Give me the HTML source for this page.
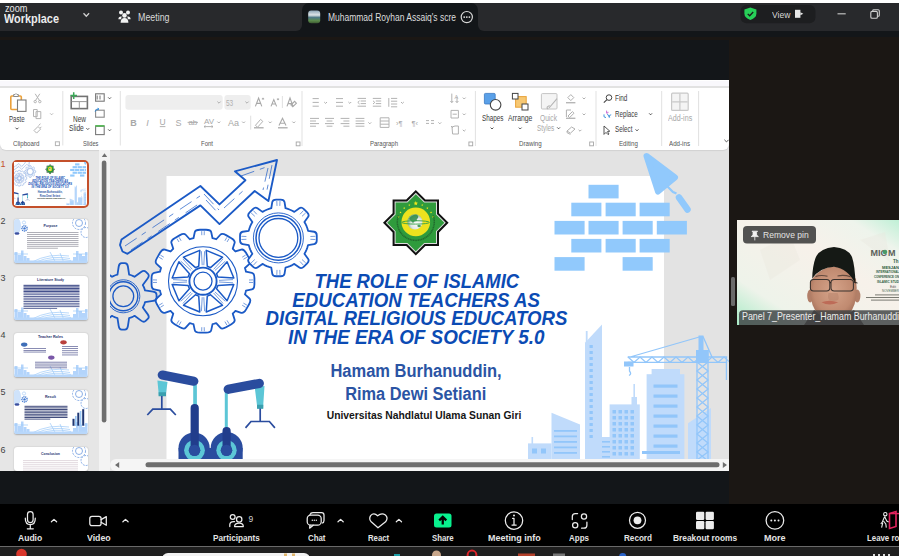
<!DOCTYPE html>
<html><head><meta charset="utf-8">
<style>
*{margin:0;padding:0;box-sizing:border-box}
html,body{width:899px;height:556px;overflow:hidden;background:#131619;font-family:"Liberation Sans",sans-serif}
.a{position:absolute}
.t{position:absolute;white-space:nowrap;line-height:1}
svg{position:absolute}
</style></head><body>
<div class="a" style="left:0;top:0;width:899px;height:3px;background:#fff"></div>
<div class="a" style="left:729px;top:37px;width:170px;height:467px;background:#1b1714"></div>
<div class="a" style="left:0;top:37px;width:899px;height:3px;background:#1b1714"></div>
<div class="a" style="left:0;top:504px;width:899px;height:42px;background:#000"></div>
<div class="a" style="left:0;top:546px;width:899px;height:1px;background:#6a6a6a"></div>
<div class="a" style="left:0;top:547px;width:899px;height:9px;background:#1f1f1f"></div>
<div class="a" style="left:0;top:3px;width:899px;height:22px;background:#28292c"></div>
<div class="a" style="left:0;top:3px;width:302px;height:28px;background:#28292c;border-bottom-right-radius:6px"></div>
<div class="a" style="left:478px;top:3px;width:421px;height:28px;background:#28292c;border-bottom-left-radius:6px"></div>
<div class="a" style="left:302px;top:3px;width:176px;height:28px;background:#131619;border-radius:7px 7px 0 0"></div>
<svg style="left:0;top:0" width="899" height="31">
 <path d="M83.5 13.3 L86.3 16.3 L89.1 13.3" fill="none" stroke="#cfcfcf" stroke-width="1.3"/>
 <!-- meeting people icon -->
 <g fill="#f2f2f2">
  <circle cx="121" cy="12.6" r="2"/><circle cx="128" cy="12.6" r="2"/>
  <circle cx="124.5" cy="15.4" r="2.3"/>
  <path d="M118.4 19.2 q0-2.6 2.6-2.6 h0.8 q-0.6 1 -0.6 2.6 z"/>
  <path d="M130.6 19.2 q0-2.6 -2.6-2.6 h-0.8 q0.6 1 0.6 2.6 z"/>
  <path d="M120.6 22.8 q0-4.8 3.9-4.8 q3.9 0 3.9 4.8 z"/>
 </g>
 <!-- tab thumbnail icon -->
 <defs>
  <linearGradient id="tg" x1="0" y1="0" x2="0" y2="1">
   <stop offset="0" stop-color="#8fa7b8"/><stop offset="0.35" stop-color="#dfe5e8"/>
   <stop offset="0.55" stop-color="#4f7a86"/><stop offset="0.8" stop-color="#5b8a4a"/><stop offset="1" stop-color="#3d5b33"/>
  </linearGradient>
 </defs>
 <rect x="308.2" y="10.6" width="12" height="12.6" rx="3" fill="url(#tg)"/>
 <!-- ellipsis circle -->
 <circle cx="466.8" cy="17.1" r="5.6" fill="none" stroke="#d8d8d8" stroke-width="1.2"/>
 <circle cx="464.2" cy="17.1" r="0.9" fill="#e0e0e0"/><circle cx="466.8" cy="17.1" r="0.9" fill="#e0e0e0"/><circle cx="469.4" cy="17.1" r="0.9" fill="#e0e0e0"/>
 <!-- view pill -->
 <rect x="740.5" y="5" width="75" height="18.3" rx="6" fill="#1d1e20"/>
 <path d="M750.4 7.5 L756.4 9.6 V13.6 Q756.4 18 750.4 20 Q744.4 18 744.4 13.6 V9.6 Z" fill="#27cf58"/>
 <path d="M747.7 13.9 L749.7 15.8 L753.2 12" fill="none" stroke="#1a1a1a" stroke-width="1.3"/>
 <rect x="795" y="9.8" width="5.4" height="8" fill="#e8e8e8"/>
 <path d="M800.4 12.3 L803.3 13.8 L800.4 15.3 Z" fill="#e8e8e8"/>
 <!-- minimize -->
 <rect x="837.5" y="13.2" width="8.2" height="1.2" fill="#bdbdbd"/>
 <!-- restore -->
 <rect x="870.8" y="11.4" width="6.6" height="6.8" rx="1.3" fill="none" stroke="#cfcfcf" stroke-width="1.1"/>
 <path d="M872.8 11.2 V10.6 Q872.8 9.8 873.8 9.8 H878.2 Q879.3 9.8 879.3 10.9 V15.2 Q879.3 16.2 878.3 16.2 H877.6" fill="none" stroke="#cfcfcf" stroke-width="1.1"/>
</svg>

<div class="a" style="left:0;top:80px;width:729px;height:391px;background:#e4e4e6;overflow:hidden">
  <div class="a" style="left:0;top:0;width:729px;height:1px;background:#fff"></div>
  <div class="a" style="left:0;top:1px;width:729px;height:5px;background:#f9f8fc"></div>
  <div class="a" style="left:0;top:6px;width:729px;height:2px;background:#e2e2e2"></div>
  <div class="a" style="left:0;top:70px;width:110px;height:321px;background:#e6e6e6"></div>
  <div class="a" style="left:110px;top:70px;width:619px;height:321px;background:#e3e3e3"></div>
  <div class="a" style="left:0;top:8px;width:729px;height:62px;background:#fff;border-radius:0 0 6px 6px;box-shadow:0 1px 1px rgba(0,0,0,0.08)"></div>
</div>
<svg style="left:110px;top:150px" width="619" height="309" viewBox="110 150 619 309" overflow="hidden">
<defs><g id="s1"><rect x="166.5" y="176" width="497.5" height="283" fill="#fff"/>
<path d="M121.50 239.50 L200.40 186.00 L219.50 204.40 L245.40 180.20 L234.90 171.30 L277.00 160.00 L268.40 201.10 L254.70 191.00 L219.50 224.10 L200.40 205.40 L127.50 253.80 L122.50 251.50 L120.00 245.00 Z" fill="none" stroke="#1b5ac6" stroke-width="1.9" stroke-linejoin="round"/>
<path d="M125 246 L200 196 M131 250 L200 203 M204 194 L219 210 M224 208 L244 190 M206 200 L219 214 M241 176 L272 165 L266 195 M268 168 L263 190" fill="none" stroke="#1b5ac6" stroke-width="0.7" stroke-dasharray="14 6 5 8"/>
<path d="M193.48 238.24 L194.76 232.31 Q195.31 229.77 199.93 229.77 L206.07 229.77 Q210.69 229.77 211.24 232.31 L212.52 238.24 L213.46 238.46 L214.39 238.70 L215.31 238.96 L216.23 239.24 L220.31 234.74 Q222.06 232.82 226.05 235.12 L231.38 238.20 Q235.37 240.50 234.58 242.98 L232.73 248.76 L233.43 249.42 L234.11 250.09 L234.78 250.77 L235.44 251.47 L241.22 249.62 Q243.70 248.83 246.00 252.82 L249.08 258.15 Q251.38 262.14 249.46 263.89 L244.96 267.97 L245.24 268.89 L245.50 269.81 L245.74 270.74 L245.96 271.68 L251.89 272.96 Q254.43 273.51 254.43 278.13 L254.43 284.27 Q254.43 288.89 251.89 289.44 L245.96 290.72 L245.74 291.66 L245.50 292.59 L245.24 293.51 L244.96 294.43 L249.46 298.51 Q251.38 300.26 249.08 304.25 L246.00 309.58 Q243.70 313.57 241.22 312.78 L235.44 310.93 L234.78 311.63 L234.11 312.31 L233.43 312.98 L232.73 313.64 L234.58 319.42 Q235.37 321.90 231.38 324.20 L226.05 327.28 Q222.06 329.58 220.31 327.66 L216.23 323.16 L215.31 323.44 L214.39 323.70 L213.46 323.94 L212.52 324.16 L211.24 330.09 Q210.69 332.63 206.07 332.63 L199.93 332.63 Q195.31 332.63 194.76 330.09 L193.48 324.16 L192.54 323.94 L191.61 323.70 L190.69 323.44 L189.77 323.16 L185.69 327.66 Q183.94 329.58 179.95 327.28 L174.62 324.20 Q170.63 321.90 171.42 319.42 L173.27 313.64 L172.57 312.98 L171.89 312.31 L171.22 311.63 L170.56 310.93 L164.78 312.78 Q162.30 313.57 160.00 309.58 L156.92 304.25 Q154.62 300.26 156.54 298.51 L161.04 294.43 L160.76 293.51 L160.50 292.59 L160.26 291.66 L160.04 290.72 L154.11 289.44 Q151.57 288.89 151.57 284.27 L151.57 278.13 Q151.57 273.51 154.11 272.96 L160.04 271.68 L160.26 270.74 L160.50 269.81 L160.76 268.89 L161.04 267.97 L156.54 263.89 Q154.62 262.14 156.92 258.15 L160.00 252.82 Q162.30 248.83 164.78 249.62 L170.56 251.47 L171.22 250.77 L171.89 250.09 L172.57 249.42 L173.27 248.76 L171.42 242.98 Q170.63 240.50 174.62 238.20 L179.95 235.12 Q183.94 232.82 185.69 234.74 L189.77 239.24 L190.69 238.96 L191.61 238.70 L192.54 238.46 Z" fill="#fff" stroke="#1b5ac6" stroke-width="1.8" stroke-linejoin="round"/>
<circle cx="203" cy="281.2" r="34.5" fill="none" stroke="#1b5ac6" stroke-width="1.1"/>
<circle cx="203" cy="281.2" r="13.6" fill="none" stroke="#1b5ac6" stroke-width="1.9"/>
<circle cx="203" cy="281.2" r="9" fill="none" stroke="#1b5ac6" stroke-width="1.3"/>
<path d="M206.24 250.37 L222.51 257.11 L210.51 267.64 L207.27 266.30 Z M227.09 261.69 L233.83 277.96 L217.90 276.93 L216.56 273.69 Z M233.83 284.44 L227.09 300.71 L216.56 288.71 L217.90 285.47 Z M222.51 305.29 L206.24 312.03 L207.27 296.10 L210.51 294.76 Z M199.76 312.03 L183.49 305.29 L195.49 294.76 L198.73 296.10 Z M178.91 300.71 L172.17 284.44 L188.10 285.47 L189.44 288.71 Z M172.17 277.96 L178.91 261.69 L189.44 273.69 L188.10 276.93 Z M183.49 257.11 L199.76 250.37 L198.73 266.30 L195.49 267.64 Z " fill="none" stroke="#1b5ac6" stroke-width="1.5" stroke-linejoin="round"/>
<path d="M201.8 235.2 L201.7 231.2 M204.2 235.2 L204.3 231.2 M224.9 240.8 L226.9 237.3 M227.0 242.0 L229.1 238.6 M242.2 257.2 L245.6 255.1 M243.4 259.3 L246.9 257.3 M249.0 280.0 L253.0 279.9 M249.0 282.4 L253.0 282.5 M243.4 303.1 L246.9 305.1 M242.2 305.2 L245.6 307.3 M227.0 320.4 L229.1 323.8 M224.9 321.6 L226.9 325.1 M204.2 327.2 L204.3 331.2 M201.8 327.2 L201.7 331.2 M181.1 321.6 L179.1 325.1 M179.0 320.4 L176.9 323.8 M163.8 305.2 L160.4 307.3 M162.6 303.1 L159.1 305.1 M157.0 282.4 L153.0 282.5 M157.0 280.0 L153.0 279.9 M162.6 259.3 L159.1 257.3 M163.8 257.2 L160.4 255.1 M179.0 242.0 L176.9 238.6 M181.1 240.8 L179.1 237.3  M202.2 265.2 L201.4 251.2 M203.8 265.2 L204.6 251.2 M213.7 269.3 L223.1 258.9 M214.9 270.5 L225.3 261.1 M219.0 280.4 L233.0 279.6 M219.0 282.0 L233.0 282.8 M214.9 291.9 L225.3 301.3 M213.7 293.1 L223.1 303.5 M203.8 297.2 L204.6 311.2 M202.2 297.2 L201.4 311.2 M192.3 293.1 L182.9 303.5 M191.1 291.9 L180.7 301.3 M187.0 282.0 L173.0 282.8 M187.0 280.4 L173.0 279.6 M191.1 270.5 L180.7 261.1 M192.3 269.3 L182.9 258.9 " stroke="#1b5ac6" stroke-width="0.6" fill="none"/>
<path d="M271.28 208.24 L272.25 202.14 Q272.66 199.53 276.11 199.53 L280.69 199.53 Q284.14 199.53 284.55 202.14 L285.52 208.24 L287.83 208.89 L290.07 209.72 L292.25 210.72 L294.34 211.89 L299.34 208.27 Q301.48 206.71 303.91 209.14 L307.16 212.39 Q309.59 214.82 308.03 216.96 L304.41 221.96 L305.58 224.05 L306.58 226.23 L307.41 228.47 L308.06 230.78 L314.16 231.75 Q316.77 232.16 316.77 235.61 L316.77 240.19 Q316.77 243.64 314.16 244.05 L308.06 245.02 L307.41 247.33 L306.58 249.57 L305.58 251.75 L304.41 253.84 L308.03 258.84 Q309.59 260.98 307.16 263.41 L303.91 266.66 Q301.48 269.09 299.34 267.53 L294.34 263.91 L292.25 265.08 L290.07 266.08 L287.83 266.91 L285.52 267.56 L284.55 273.66 Q284.14 276.27 280.69 276.27 L276.11 276.27 Q272.66 276.27 272.25 273.66 L271.28 267.56 L268.97 266.91 L266.73 266.08 L264.55 265.08 L262.46 263.91 L257.46 267.53 Q255.32 269.09 252.89 266.66 L249.64 263.41 Q247.21 260.98 248.77 258.84 L252.39 253.84 L251.22 251.75 L250.22 249.57 L249.39 247.33 L248.74 245.02 L242.64 244.05 Q240.03 243.64 240.03 240.19 L240.03 235.61 Q240.03 232.16 242.64 231.75 L248.74 230.78 L249.39 228.47 L250.22 226.23 L251.22 224.05 L252.39 221.96 L248.77 216.96 Q247.21 214.82 249.64 212.39 L252.89 209.14 Q255.32 206.71 257.46 208.27 L262.46 211.89 L264.55 210.72 L266.73 209.72 L268.97 208.89 Z" fill="#fff" stroke="#1b5ac6" stroke-width="1.8" stroke-linejoin="round"/>
<circle cx="278.4" cy="237.9" r="25" fill="none" stroke="#1b5ac6" stroke-width="0.9"/>
<circle cx="278.4" cy="237.9" r="22.4" fill="none" stroke="#1b5ac6" stroke-width="1.5"/>
<circle cx="278.4" cy="237.9" r="19.4" fill="none" stroke="#1b5ac6" stroke-width="1.3"/>
<path d="M277.0 205.9 L276.8 200.9 M279.8 205.9 L280.0 200.9 M300.0 214.3 L303.4 210.6 M302.0 216.3 L305.7 212.9 M310.4 236.5 L315.4 236.3 M310.4 239.3 L315.4 239.5 M302.0 259.5 L305.7 262.9 M300.0 261.5 L303.4 265.2 M279.8 269.9 L280.0 274.9 M277.0 269.9 L276.8 274.9 M256.8 261.5 L253.4 265.2 M254.8 259.5 L251.1 262.9 M246.4 239.3 L241.4 239.5 M246.4 236.5 L241.4 236.3 M254.8 216.3 L251.1 212.9 M256.8 214.3 L253.4 210.6 " stroke="#1b5ac6" stroke-width="0.6" fill="none"/>
<path d="M117.48 274.57 L118.70 266.50 Q119.22 263.05 121.67 263.05 L124.93 263.05 Q127.38 263.05 127.90 266.50 L129.12 274.57 L130.53 274.99 L131.91 275.51 L133.25 276.12 L134.55 276.81 L141.11 271.98 Q143.92 269.90 145.66 271.63 L147.97 273.94 Q149.70 275.68 147.62 278.49 L142.79 285.05 L143.48 286.35 L144.09 287.69 L144.61 289.07 L145.03 290.48 L153.10 291.70 Q156.55 292.22 156.55 294.67 L156.55 297.93 Q156.55 300.38 153.10 300.90 L145.03 302.12 L144.61 303.53 L144.09 304.91 L143.48 306.25 L142.79 307.55 L147.62 314.11 Q149.70 316.92 147.97 318.66 L145.66 320.97 Q143.92 322.70 141.11 320.62 L134.55 315.79 L133.25 316.48 L131.91 317.09 L130.53 317.61 L129.12 318.03 L127.90 326.10 Q127.38 329.55 124.93 329.55 L121.67 329.55 Q119.22 329.55 118.70 326.10 L117.48 318.03 L116.07 317.61 L114.69 317.09 L113.35 316.48 L112.05 315.79 L105.49 320.62 Q102.68 322.70 100.94 320.97 L98.63 318.66 Q96.90 316.92 98.98 314.11 L103.81 307.55 L103.12 306.25 L102.51 304.91 L101.99 303.53 L101.57 302.12 L93.50 300.90 Q90.05 300.38 90.05 297.93 L90.05 294.67 Q90.05 292.22 93.50 291.70 L101.57 290.48 L101.99 289.07 L102.51 287.69 L103.12 286.35 L103.81 285.05 L98.98 278.49 Q96.90 275.68 98.63 273.94 L100.94 271.63 Q102.68 269.90 105.49 271.98 L112.05 276.81 L113.35 276.12 L114.69 275.51 L116.07 274.99 Z" fill="none" stroke="#1b5ac6" stroke-width="1.8" stroke-linejoin="round"/>
<circle cx="123.3" cy="296.3" r="16.5" fill="none" stroke="#1b5ac6" stroke-width="0.9"/>
<circle cx="123.3" cy="296.3" r="14.5" fill="none" stroke="#1b5ac6" stroke-width="1.4"/>
<circle cx="123.3" cy="296.3" r="10.4" fill="none" stroke="#1b5ac6" stroke-width="1.3"/>
<g>
<path d="M193.2 385 h3.7 v20 h-3.7z M224.8 392 h3 v37 h-3z" fill="#5cc6d6"/>
<circle cx="194.1" cy="448.1" r="15.6" fill="#2a4c9e"/><rect x="178.5" y="448" width="33" height="12" fill="#2a4c9e"/>
<circle cx="226.7" cy="448.1" r="16" fill="#2a4c9e"/><rect x="210.7" y="448" width="32" height="12" fill="#2a4c9e"/>
<circle cx="194.5" cy="450.3" r="10.4" fill="#5cc6d6"/><circle cx="194.5" cy="450.3" r="5.8" fill="#2a4c9e"/>
<circle cx="226.5" cy="450.3" r="10.2" fill="#5cc6d6"/><circle cx="226.5" cy="450.3" r="5.8" fill="#2a4c9e"/>
<path d="M194.7 408 V450 M226.6 431 V450" stroke="#213d8c" stroke-width="8.2" stroke-linecap="round"/><circle cx="194.6" cy="450.3" r="5.6" fill="#2a4c9e"/><circle cx="226.5" cy="450.3" r="5.6" fill="#2a4c9e"/>
<path d="M157.4 380.5 L167.5 382 L165.7 396 L158.9 396 Z M254.7 387 L264.5 386 L263 408.6 L257.4 408.6 Z" fill="#5cc6d6"/>
<path d="M158.6 392.2 H166 V396.2 H158.6 Z M257 404.8 H263.3 V408.8 H257 Z" fill="#3a9fae"/>
<path d="M162.3 375 L193.8 381.2 M228.2 389.3 L259.3 383.4" stroke="#2a4c9e" stroke-width="9.2" stroke-linecap="round"/>
<path d="M161.8 396 V409.2 M147.3 415 L152.8 409.2 H170.3 L175.8 415 M260.2 408.6 V421.5 M245.5 427.9 L251 421.5 H269.4 L274.9 427.9" fill="none" stroke="#2a4c9e" stroke-width="1.7"/>
</g>
<path d="M415.80 189.99 L425.41 199.60 L439.00 199.60 L439.00 213.19 L448.61 222.80 L439.00 232.41 L439.00 246.00 L425.41 246.00 L415.80 255.61 L406.19 246.00 L392.60 246.00 L392.60 232.41 L382.99 222.80 L392.60 213.19 L392.60 199.60 L406.19 199.60 Z" fill="#111"/>
<path d="M415.80 192.82 L424.58 201.60 L437.00 201.60 L437.00 214.02 L445.78 222.80 L437.00 231.58 L437.00 244.00 L424.58 244.00 L415.80 252.78 L407.02 244.00 L394.60 244.00 L394.60 231.58 L385.82 222.80 L394.60 214.02 L394.60 201.60 L407.02 201.60 Z" fill="#ddd"/>
<path d="M415.80 194.23 L424.17 202.60 L436.00 202.60 L436.00 214.43 L444.37 222.80 L436.00 231.17 L436.00 243.00 L424.17 243.00 L415.80 251.37 L407.43 243.00 L395.60 243.00 L395.60 231.17 L387.23 222.80 L395.60 214.43 L395.60 202.60 L407.43 202.60 Z" fill="#2f9b3c"/>
<circle cx="415.8" cy="221.9" r="14.3" fill="#eee21e"/>
<defs><radialGradient id="glb" cx="0.62" cy="0.62" r="0.7"><stop offset="0" stop-color="#ffffff"/><stop offset="0.55" stop-color="#dfe6e0"/><stop offset="1" stop-color="#5f9f6e"/></radialGradient></defs>
<circle cx="414.9" cy="221.9" r="7.6" fill="url(#glb)"/>
<path d="M409 219 q2 -4 7 -4.5 q3 1 2 3.5 q-2 1 -1 3 q-3 0 -4 2 q-2 -2 -4 -4z" fill="#2d8a4a" opacity="0.85"/>
<path d="M417.5 225 q2.5 -1 3.6 1 q-1.5 2 -3.6 0.6z" fill="#4a9a60"/>
<ellipse cx="415.6" cy="222.4" rx="13.8" ry="1.7" fill="none" stroke="#34a046" stroke-width="0.9"/>
<path d="M415.80 201.10 L416.41 202.56 L417.99 202.69 L416.78 203.72 L417.15 205.26 L415.80 204.44 L414.45 205.26 L414.82 203.72 L413.61 202.69 L415.19 202.56 Z" fill="#f2e81a"/><path d="M409.35 203.95 L409.65 204.68 L410.44 204.74 L409.84 205.26 L410.03 206.03 L409.35 205.61 L408.67 206.03 L408.86 205.26 L408.26 204.74 L409.05 204.68 Z" fill="#f2e81a"/><path d="M404.23 206.96 L404.53 207.69 L405.32 207.76 L404.72 208.27 L404.91 209.04 L404.23 208.63 L403.55 209.04 L403.74 208.27 L403.14 207.76 L403.93 207.69 Z" fill="#f2e81a"/><path d="M400.54 211.21 L400.84 211.94 L401.63 212.01 L401.03 212.52 L401.21 213.29 L400.54 212.88 L399.86 213.29 L400.04 212.52 L399.44 212.01 L400.23 211.94 Z" fill="#f2e81a"/><path d="M398.50 215.79 L398.80 216.52 L399.59 216.58 L398.99 217.10 L399.17 217.87 L398.50 217.46 L397.82 217.87 L398.01 217.10 L397.40 216.58 L398.19 216.52 Z" fill="#f2e81a"/><path d="M422.25 203.95 L422.55 204.68 L423.34 204.74 L422.74 205.26 L422.93 206.03 L422.25 205.61 L421.57 206.03 L421.76 205.26 L421.16 204.74 L421.95 204.68 Z" fill="#f2e81a"/><path d="M427.37 206.96 L427.67 207.69 L428.46 207.76 L427.86 208.27 L428.05 209.04 L427.37 208.63 L426.69 209.04 L426.88 208.27 L426.28 207.76 L427.07 207.69 Z" fill="#f2e81a"/><path d="M431.06 211.21 L431.37 211.94 L432.16 212.01 L431.56 212.52 L431.74 213.29 L431.06 212.88 L430.39 213.29 L430.57 212.52 L429.97 212.01 L430.76 211.94 Z" fill="#f2e81a"/><path d="M433.10 215.79 L433.41 216.52 L434.20 216.58 L433.59 217.10 L433.78 217.87 L433.10 217.46 L432.43 217.87 L432.61 217.10 L432.01 216.58 L432.80 216.52 Z" fill="#f2e81a"/>
<path d="M398.4 215.6 A18.5 18.5 0 1 0 433.2 215.6" fill="none" stroke="#1d5a28" stroke-width="1.5" stroke-dasharray="1.2 0.5" opacity="0.75"/>
<rect x="588.5" y="184.8" width="30.1" height="13.6" fill="#91c9fc"/><rect x="571.3" y="202.7" width="30.1" height="13.6" fill="#91c9fc"/><rect x="605.6" y="202.7" width="30.1" height="13.6" fill="#91c9fc"/><rect x="639.6" y="202.7" width="30.1" height="13.6" fill="#91c9fc"/><rect x="554.5" y="220.9" width="30.1" height="13.6" fill="#91c9fc"/><rect x="588.5" y="220.9" width="30.1" height="13.6" fill="#91c9fc"/><rect x="622.6" y="220.9" width="30.1" height="13.6" fill="#91c9fc"/><rect x="656.8" y="220.9" width="30.1" height="13.6" fill="#91c9fc"/><rect x="571.3" y="238.9" width="30.1" height="13.6" fill="#91c9fc"/><rect x="605.6" y="238.9" width="30.1" height="13.6" fill="#91c9fc"/><rect x="639.6" y="238.9" width="30.1" height="13.6" fill="#91c9fc"/><rect x="554.5" y="257.1" width="30.1" height="13.6" fill="#91c9fc"/><rect x="622.6" y="257.1" width="30.1" height="13.6" fill="#91c9fc"/>
<path d="M646.5 156 L675 177.5 L658 191.5 Z" fill="#91c9fc" stroke="#91c9fc" stroke-width="6" stroke-linejoin="round"/>
<path d="M667 186 L673 192 L676.5 193.5" fill="none" stroke="#91c9fc" stroke-width="2.2"/>
<path d="M679 197.5 L687.5 209.5" stroke="#91c9fc" stroke-width="6.5" stroke-linecap="round"/>
<g fill="#c0dbfb"><rect x="528" y="443.4" width="23.5" height="16"/><rect x="531.5" y="437" width="1.6" height="7"/><path d="M551.5 412.7 L580 424.5 V460 H551.5 Z"/><path d="M585 342.7 L602 324.5 V460 H585 Z"/><rect x="585.8" y="331" width="1.8" height="12"/><rect x="602" y="437" width="10" height="23"/><rect x="609.6" y="404.4" width="30.2" height="56"/><rect x="631.5" y="397" width="5.5" height="8"/><rect x="633.4" y="384" width="1.6" height="14"/><rect x="646.6" y="374.2" width="37.8" height="86"/><rect x="651.6" y="369" width="28.4" height="6"/><path d="M688 423.3 L711 408 V460 H688 Z"/></g><g fill="#92c6fa"><rect x="532" y="448.5" width="5" height="5"/><rect x="541" y="448.5" width="5" height="5"/><rect x="554" y="430" width="23" height="1.8"/><rect x="554" y="435.5" width="23" height="1.8"/><rect x="554" y="441" width="23" height="1.8"/><rect x="554" y="446.5" width="23" height="1.8"/><rect x="554" y="452" width="23" height="1.8"/><rect x="589.5" y="345" width="3.3" height="3"/><rect x="589.5" y="351" width="3.3" height="3"/><rect x="589.5" y="357" width="3.3" height="3"/><rect x="589.5" y="363" width="3.3" height="3"/><rect x="589.5" y="369" width="3.3" height="3"/><rect x="589.5" y="375" width="3.3" height="3"/><rect x="589.5" y="381" width="3.3" height="3"/><rect x="589.5" y="387" width="3.3" height="3"/><rect x="589.5" y="393" width="3.3" height="3"/><rect x="589.5" y="399" width="3.3" height="3"/><rect x="589.5" y="405" width="3.3" height="3"/><rect x="589.5" y="411" width="3.3" height="3"/><rect x="589.5" y="417" width="3.3" height="3"/><rect x="589.5" y="423" width="3.3" height="3"/><rect x="589.5" y="429" width="3.3" height="3"/><rect x="589.5" y="435" width="3.3" height="3"/><rect x="602" y="441" width="8" height="1.6"/><rect x="602" y="446" width="8" height="1.6"/><rect x="602" y="451" width="8" height="1.6"/><rect x="602" y="456" width="8" height="1.6"/><rect x="612.5" y="410" width="3.5" height="3.5"/><rect x="612.5" y="416" width="3.5" height="3.5"/><rect x="612.5" y="422" width="3.5" height="3.5"/><rect x="612.5" y="428" width="3.5" height="3.5"/><rect x="612.5" y="434" width="3.5" height="3.5"/><rect x="612.5" y="440" width="3.5" height="3.5"/><rect x="612.5" y="446" width="3.5" height="3.5"/><rect x="612.5" y="452" width="3.5" height="3.5"/><rect x="618.5" y="410" width="3.5" height="3.5"/><rect x="618.5" y="416" width="3.5" height="3.5"/><rect x="618.5" y="422" width="3.5" height="3.5"/><rect x="618.5" y="428" width="3.5" height="3.5"/><rect x="618.5" y="434" width="3.5" height="3.5"/><rect x="618.5" y="440" width="3.5" height="3.5"/><rect x="618.5" y="446" width="3.5" height="3.5"/><rect x="618.5" y="452" width="3.5" height="3.5"/><rect x="624.5" y="410" width="3.5" height="3.5"/><rect x="624.5" y="416" width="3.5" height="3.5"/><rect x="624.5" y="422" width="3.5" height="3.5"/><rect x="624.5" y="428" width="3.5" height="3.5"/><rect x="624.5" y="434" width="3.5" height="3.5"/><rect x="624.5" y="440" width="3.5" height="3.5"/><rect x="624.5" y="446" width="3.5" height="3.5"/><rect x="624.5" y="452" width="3.5" height="3.5"/><rect x="630.5" y="410" width="3.5" height="3.5"/><rect x="630.5" y="416" width="3.5" height="3.5"/><rect x="630.5" y="422" width="3.5" height="3.5"/><rect x="630.5" y="428" width="3.5" height="3.5"/><rect x="630.5" y="434" width="3.5" height="3.5"/><rect x="630.5" y="440" width="3.5" height="3.5"/><rect x="630.5" y="446" width="3.5" height="3.5"/><rect x="630.5" y="452" width="3.5" height="3.5"/><rect x="653.5" y="384.5" width="24" height="3.2"/><rect x="653.5" y="394.5" width="24" height="3.2"/><rect x="653.5" y="404.5" width="24" height="3.2"/><rect x="653.5" y="414.5" width="24" height="3.2"/><rect x="653.5" y="424.5" width="24" height="3.2"/><rect x="653.5" y="434.5" width="24" height="3.2"/><rect x="653.5" y="444.5" width="24" height="3.2"/><rect x="642" y="451" width="38" height="3"/></g>
<g fill="none" stroke="#92c6fa" stroke-width="1.3"><path d="M697 350 V460 M708 350 V460 M627.7 357 H727.2 M627.7 362.4 H727.2 M726.4 357 V380 M701 336.5 L630 357 M703 336.5 L712 357"/><path d="M697 362 L708 371 L697 380 L708 389 L697 398 L708 407 L697 416 L708 425 L697 434 L708 443 L697 452 L708 461"/><path d="M708 362 L697 371 L708 380 L697 389 L708 398 L697 407 L708 416 L697 425 L708 434 L697 443 L708 452 L697 460"/><path d="M628 357 L634 362.4 L640 357 L646 362.4 L652 357 L658 362.4 L664 357 L670 362.4 L676 357 L682 362.4 L688 357 L694 362.4 L700 357 L706 362.4 L712 357 L718 362.4 L724 357 L730 362.4"/><path d="M629.5 367 V371 Q632 374 629 375.5"/></g><g fill="#92c6fa"><rect x="698.5" y="335.5" width="5" height="22"/><rect x="696" y="350" width="12.5" height="12.5"/><rect x="624" y="361.5" width="9.5" height="5"/></g>
<g font-family="Liberation Sans" font-weight="bold" font-style="italic" font-size="20" fill="#0b4bb4"><text x="314.6" y="288.1" textLength="204.5" lengthAdjust="spacingAndGlyphs">THE ROLE OF ISLAMIC</text><text x="292.3" y="306.8" textLength="247.6" lengthAdjust="spacingAndGlyphs">EDUCATION TEACHERS AS</text><text x="265.6" y="325.1" textLength="301.9" lengthAdjust="spacingAndGlyphs">DIGITAL RELIGIOUS EDUCATORS</text><text x="287.9" y="344.2" textLength="256.5" lengthAdjust="spacingAndGlyphs">IN THE ERA OF SOCIETY 5.0</text></g>
<g font-family="Liberation Sans" font-weight="bold" font-size="17.6" fill="#2b54a4"><text x="330.4" y="377" textLength="171.3" lengthAdjust="spacingAndGlyphs">Hamam Burhanuddin,</text><text x="345.2" y="400.4" textLength="141" lengthAdjust="spacingAndGlyphs">Rima Dewi Setiani</text></g>
<text x="326.7" y="418.5" textLength="194.6" lengthAdjust="spacingAndGlyphs" font-family="Liberation Sans" font-weight="bold" font-size="11.8" fill="#151515">Universitas Nahdlatul Ulama Sunan Giri</text></g></defs>
<use href="#s1"/>
</svg>
<div class="a" style="left:99px;top:150px;width:11px;height:321px;background:#f3f3f3"></div>
<svg style="left:99px;top:150px" width="11" height="321">
 <path d="M2.8 7 L5.5 3.2 L8.2 7 Z" fill="#6e6e6e"/>
 <rect x="2.8" y="10.5" width="4.6" height="262" rx="2.3" fill="#6e6e6e"/>
</svg>
<div class="a" style="left:110px;top:459px;width:619px;height:12px;background:#f5f5f5;border-radius:6px 0 0 6px"></div>
<svg style="left:110px;top:459px" width="619" height="12">
 <path d="M9.2 3 L5 6 L9.2 9 Z" fill="#6e6e6e"/>
 <rect x="35.5" y="3.2" width="574" height="5" rx="2.5" fill="#6e6e6e"/>
 <path d="M612.8 3 L617 6 L612.8 9 Z" fill="#6e6e6e"/>
</svg>
<div class="a" style="left:12.2px;top:160px;width:76.4px;height:47.6px;border:2px solid #c4502b;border-radius:5px;background:#fff"></div>
<svg style="left:14.4px;top:162.2px" width="72" height="43.2" viewBox="166.5 176 497.5 280" preserveAspectRatio="none" overflow="hidden"><use href="#s1"/></svg>
<div class="t" style="left:0.6px;top:160.3px;font-size:9px;color:#c4502b">1</div>
<div class="t" style="left:0.6px;top:217.4px;font-size:9px;color:#444">2</div>
<div class="t" style="left:0.6px;top:274.0px;font-size:9px;color:#444">3</div>
<div class="t" style="left:0.6px;top:331.4px;font-size:9px;color:#444">4</div>
<div class="t" style="left:0.6px;top:388.3px;font-size:9px;color:#444">5</div>
<div class="t" style="left:0.6px;top:445.8px;font-size:9px;color:#444">6</div>
<div class="a" style="left:14px;top:218.6px;width:73.5px;height:44.5px;background:#fff;border-radius:3px;box-shadow:0 0.5px 1.5px rgba(0,0,0,0.25);overflow:hidden">
<svg style="left:0;top:0" width="73.5" height="44.5" viewBox="0 0 73.5 44.5"><g fill="#b3d4fb"><rect x="0.5" y="33" width="3" height="11.5"/><rect x="3.5" y="36" width="3.5" height="8.5"/><rect x="7" y="31.5" width="2.5" height="13.0"/><rect x="9.5" y="37" width="3" height="7.5"/><rect x="12.5" y="39" width="3" height="5.5"/><rect x="59" y="38" width="3" height="6.5"/><rect x="62" y="32" width="2.5" height="12.5"/><rect x="64.5" y="35" width="3.5" height="9.5"/><rect x="68" y="37" width="3" height="7.5"/><rect x="71" y="33" width="2.5" height="11.5"/></g><g fill="none" stroke="#9cc8f8" stroke-width="0.7"><path d="M18 43 Q35 34 55 37 M22 43 Q38 36 56 39.5 M26 43.5 Q40 38 57 41.5 M36 33 L42 44 M46 34 L50 44"/><path d="M0 35 H14 M59 35 H73.5"/></g><rect x="0" y="41.5" width="73.5" height="3" fill="#b8d7fb"/><ellipse cx="2.5" cy="7" rx="4.5" ry="8" fill="#cfe3fb"/><ellipse cx="3" cy="14.5" rx="2.5" ry="1.3" fill="#3a4fa0"/><circle cx="10.5" cy="9.4" r="2.6" fill="none" stroke="#3f77d0" stroke-width="1.4" stroke-dasharray="1.1 0.7"/><circle cx="10.5" cy="9.4" r="1.2" fill="#3f77d0"/><circle cx="10" cy="3.5" r="1.6" fill="none" stroke="#9ec6f5" stroke-width="0.6"/><g fill="none" stroke="#6e9ce0" stroke-width="0.8" opacity="1"><circle cx="65" cy="4" r="6.5" stroke-dasharray="2 1.2"/><circle cx="65" cy="4" r="3.5"/><circle cx="72" cy="13.5" r="5" stroke-dasharray="2 1"/></g><text x="36.5" y="7.6" text-anchor="middle" font-family="Liberation Sans" font-weight="bold" font-size="4.2" fill="#27336e" textLength="14" lengthAdjust="spacingAndGlyphs">Purpose</text><g fill="#7d7d8a" opacity="0.8"><rect x="13" y="13.20" width="51.50" height="0.75"/><rect x="13" y="15.15" width="51.50" height="0.75"/><rect x="13" y="17.10" width="51.50" height="0.75"/><rect x="13" y="19.05" width="51.50" height="0.75"/><rect x="13" y="21.00" width="51.50" height="0.75"/><rect x="13" y="22.95" width="51.50" height="0.75"/><rect x="13" y="24.90" width="51.50" height="0.75"/><rect x="13" y="26.85" width="51.50" height="0.75"/><rect x="13" y="28.80" width="30.90" height="0.75"/></g></svg>
</div>
<div class="a" style="left:14px;top:275.9px;width:73.5px;height:44.5px;background:#fff;border-radius:3px;box-shadow:0 0.5px 1.5px rgba(0,0,0,0.25);overflow:hidden">
<svg style="left:0;top:0" width="73.5" height="44.5" viewBox="0 0 73.5 44.5"><g fill="#b3d4fb"><rect x="0.5" y="33" width="3" height="11.5"/><rect x="3.5" y="36" width="3.5" height="8.5"/><rect x="7" y="31.5" width="2.5" height="13.0"/><rect x="9.5" y="37" width="3" height="7.5"/><rect x="12.5" y="39" width="3" height="5.5"/><rect x="59" y="38" width="3" height="6.5"/><rect x="62" y="32" width="2.5" height="12.5"/><rect x="64.5" y="35" width="3.5" height="9.5"/><rect x="68" y="37" width="3" height="7.5"/><rect x="71" y="33" width="2.5" height="11.5"/></g><g fill="none" stroke="#9cc8f8" stroke-width="0.7"><path d="M18 43 Q35 34 55 37 M22 43 Q38 36 56 39.5 M26 43.5 Q40 38 57 41.5 M36 33 L42 44 M46 34 L50 44"/><path d="M0 35 H14 M59 35 H73.5"/></g><rect x="0" y="41.5" width="73.5" height="3" fill="#b8d7fb"/><text x="36.5" y="4.6" text-anchor="middle" font-family="Liberation Sans" font-weight="bold" font-size="3.8" fill="#27336e" textLength="27" lengthAdjust="spacingAndGlyphs">Literature Study</text><g fill="#3a4786" opacity="0.95"><rect x="9.5" y="8.80" width="56.00" height="1.1"/><rect x="9.5" y="10.35" width="56.00" height="1.1"/><rect x="9.5" y="11.90" width="56.00" height="1.1"/><rect x="9.5" y="13.45" width="56.00" height="1.1"/><rect x="9.5" y="15.00" width="56.00" height="1.1"/></g><g fill="#3a4786" opacity="0.9"><rect x="9.5" y="16.60" width="56.00" height="0.9"/><rect x="9.5" y="18.30" width="56.00" height="0.9"/><rect x="9.5" y="20.00" width="56.00" height="0.9"/><rect x="9.5" y="21.70" width="56.00" height="0.9"/><rect x="9.5" y="23.40" width="56.00" height="0.9"/><rect x="9.5" y="25.10" width="56.00" height="0.9"/><rect x="9.5" y="26.80" width="56.00" height="0.9"/><rect x="9.5" y="28.50" width="56.00" height="0.9"/><rect x="9.5" y="30.20" width="56.00" height="0.9"/><rect x="9.5" y="31.90" width="33.60" height="0.9"/></g></svg>
</div>
<div class="a" style="left:14px;top:332.6px;width:73.5px;height:44.5px;background:#fff;border-radius:3px;box-shadow:0 0.5px 1.5px rgba(0,0,0,0.25);overflow:hidden">
<svg style="left:0;top:0" width="73.5" height="44.5" viewBox="0 0 73.5 44.5"><g fill="#b3d4fb"><rect x="0.5" y="33" width="3" height="11.5"/><rect x="3.5" y="36" width="3.5" height="8.5"/><rect x="7" y="31.5" width="2.5" height="13.0"/><rect x="9.5" y="37" width="3" height="7.5"/><rect x="12.5" y="39" width="3" height="5.5"/><rect x="59" y="38" width="3" height="6.5"/><rect x="62" y="32" width="2.5" height="12.5"/><rect x="64.5" y="35" width="3.5" height="9.5"/><rect x="68" y="37" width="3" height="7.5"/><rect x="71" y="33" width="2.5" height="11.5"/></g><g fill="none" stroke="#9cc8f8" stroke-width="0.7"><path d="M18 43 Q35 34 55 37 M22 43 Q38 36 56 39.5 M26 43.5 Q40 38 57 41.5 M36 33 L42 44 M46 34 L50 44"/><path d="M0 35 H14 M59 35 H73.5"/></g><rect x="0" y="41.5" width="73.5" height="3" fill="#b8d7fb"/><text x="36.5" y="4.5" text-anchor="middle" font-family="Liberation Sans" font-weight="bold" font-size="3.8" fill="#27336e" textLength="25" lengthAdjust="spacingAndGlyphs">Teacher Roles</text><ellipse cx="10.2" cy="11.6" rx="3.2" ry="2.1" fill="#3f6fb8"/><ellipse cx="49.5" cy="9.3" rx="3.2" ry="2.1" fill="#b9403c"/><ellipse cx="37.3" cy="24.6" rx="3.2" ry="2.1" fill="#7a58a8"/><g fill="#3a3f80" opacity="0.85"><rect x="9.5" y="15.30" width="22.50" height="0.7"/><rect x="9.5" y="17.00" width="22.50" height="0.7"/><rect x="9.5" y="18.70" width="22.50" height="0.7"/></g><g fill="#3a3f80" opacity="0.85"><rect x="48" y="13.20" width="16.00" height="0.7"/><rect x="48" y="15.30" width="16.00" height="0.7"/><rect x="48" y="17.40" width="16.00" height="0.7"/><rect x="48" y="19.50" width="16.00" height="0.7"/><rect x="48" y="21.60" width="16.00" height="0.7"/></g><g fill="#3a3f80" opacity="0.9"><rect x="21" y="28.80" width="32.00" height="0.7"/><rect x="21" y="30.70" width="32.00" height="0.7"/><rect x="21" y="32.60" width="32.00" height="0.7"/><rect x="21" y="34.50" width="32.00" height="0.7"/></g></svg>
</div>
<div class="a" style="left:14px;top:389.8px;width:73.5px;height:44.5px;background:#fff;border-radius:3px;box-shadow:0 0.5px 1.5px rgba(0,0,0,0.25);overflow:hidden">
<svg style="left:0;top:0" width="73.5" height="44.5" viewBox="0 0 73.5 44.5"><g fill="#b3d4fb"><rect x="0.5" y="33" width="3" height="11.5"/><rect x="3.5" y="36" width="3.5" height="8.5"/><rect x="7" y="31.5" width="2.5" height="13.0"/><rect x="9.5" y="37" width="3" height="7.5"/><rect x="12.5" y="39" width="3" height="5.5"/><rect x="59" y="38" width="3" height="6.5"/><rect x="62" y="32" width="2.5" height="12.5"/><rect x="64.5" y="35" width="3.5" height="9.5"/><rect x="68" y="37" width="3" height="7.5"/><rect x="71" y="33" width="2.5" height="11.5"/></g><g fill="none" stroke="#9cc8f8" stroke-width="0.7"><path d="M18 43 Q35 34 55 37 M22 43 Q38 36 56 39.5 M26 43.5 Q40 38 57 41.5 M36 33 L42 44 M46 34 L50 44"/><path d="M0 35 H14 M59 35 H73.5"/></g><rect x="0" y="41.5" width="73.5" height="3" fill="#b8d7fb"/><ellipse cx="2.5" cy="7" rx="4.5" ry="8" fill="#cfe3fb"/><ellipse cx="3" cy="14.5" rx="2.5" ry="1.3" fill="#3a4fa0"/><circle cx="10.5" cy="9.4" r="2.6" fill="none" stroke="#3f77d0" stroke-width="1.4" stroke-dasharray="1.1 0.7"/><circle cx="10.5" cy="9.4" r="1.2" fill="#3f77d0"/><circle cx="10" cy="3.5" r="1.6" fill="none" stroke="#9ec6f5" stroke-width="0.6"/><g fill="none" stroke="#6e9ce0" stroke-width="0.8" opacity="1"><circle cx="65" cy="4" r="6.5" stroke-dasharray="2 1.2"/><circle cx="65" cy="4" r="3.5"/><circle cx="72" cy="13.5" r="5" stroke-dasharray="2 1"/></g><text x="36.5" y="7.6" text-anchor="middle" font-family="Liberation Sans" font-weight="bold" font-size="4" fill="#27336e" textLength="11" lengthAdjust="spacingAndGlyphs">Result</text><g fill="#2e3a70" opacity="0.9"><rect x="10.5" y="15.80" width="43.00" height="1.0"/><rect x="10.5" y="17.40" width="43.00" height="1.0"/><rect x="10.5" y="19.00" width="43.00" height="1.0"/><rect x="10.5" y="20.60" width="43.00" height="1.0"/><rect x="10.5" y="22.20" width="43.00" height="1.0"/><rect x="10.5" y="23.80" width="43.00" height="1.0"/><rect x="10.5" y="25.40" width="43.00" height="1.0"/><rect x="10.5" y="27.00" width="43.00" height="1.0"/><rect x="10.5" y="28.60" width="25.80" height="1.0"/></g><g fill="#1f3672"><rect x="58.5" y="28.8" width="2" height="7"/><rect x="63.3" y="22.7" width="2" height="13"/><rect x="68.2" y="19.2" width="2" height="16.5"/></g><g fill="#9ccaf8"><rect x="61" y="26" width="1.6" height="10"/><rect x="65.8" y="21" width="1.6" height="15"/></g></svg>
</div>
<div class="a" style="left:14px;top:447px;width:73.5px;height:24px;background:#fff;border-radius:3px;box-shadow:0 0.5px 1.5px rgba(0,0,0,0.25);overflow:hidden">
<svg style="left:0;top:0" width="73.5" height="44.5" viewBox="0 0 73.5 44.5"><g fill="none" stroke="#6e9ce0" stroke-width="0.8" opacity="1"><circle cx="65" cy="4" r="6.5" stroke-dasharray="2 1.2"/><circle cx="65" cy="4" r="3.5"/><circle cx="72" cy="13.5" r="5" stroke-dasharray="2 1"/></g><text x="36.5" y="7.5" text-anchor="middle" font-family="Liberation Sans" font-weight="bold" font-size="4.2" fill="#27336e" textLength="19" lengthAdjust="spacingAndGlyphs">Conclusion</text><g fill="#a58a9c" opacity="0.5"><rect x="9" y="13.00" width="55.00" height="0.6"/><rect x="9" y="14.95" width="55.00" height="0.6"/><rect x="9" y="16.90" width="55.00" height="0.6"/><rect x="9" y="18.85" width="55.00" height="0.6"/><rect x="9" y="20.80" width="55.00" height="0.6"/><rect x="9" y="22.75" width="55.00" height="0.6"/></g></svg>
</div>
<div class="a" style="left:729px;top:150px;width:0;height:0"></div>
<svg style="left:0;top:0" width="729" height="150">
 <g stroke="#e1e1e1" stroke-width="1">
  <path d="M62.8 91 V145.5 M120.3 91 V145.5 M302 91 V146 M475.4 91 V146 M596 91 V146 M661.7 91 V146 M698.6 91 V146"/>
 </g>
 <!-- Paste -->
 <rect x="10.8" y="96" width="10.5" height="13.5" rx="1" fill="#fff" stroke="#eba13b" stroke-width="1.6"/>
 <path d="M13.6 96.5 V94.6 H15 Q16 92.6 17 94.6 H18.4 V96.5 Z" fill="#fff" stroke="#8a8a8a" stroke-width="1"/>
 <rect x="17.5" y="100" width="8.5" height="11.4" fill="#fff" stroke="#7c7c7c" stroke-width="1.1"/>
 <g fill="none" stroke="#555" stroke-width="1">
  <path d="M15.5 127.7 L17 129.2 L18.5 127.7"/>
 </g>
 <g fill="none" stroke="#b4b4b4" stroke-width="1">
  <!-- scissors -->
  <path d="M35.2 93.8 L39.8 101 M39.8 93.8 L35.2 101"/>
  <circle cx="35.2" cy="101.6" r="1.2"/><circle cx="39.8" cy="101.6" r="1.2"/>
  <!-- copy -->
  <path d="M33.5 109.5 H37.2 V116.6 H33.5 Z M36 111.6 H40.8 V118.6 H36 Z"/>
  <path d="M50.2 113.4 L51.6 114.8 L53 113.4"/>
  <!-- painter -->
  <path d="M34 130.5 L38 126.5 L40.6 129.1 L36.6 133.1 Z M38.5 125.5 L40.5 123.8 M40.2 128 L41.4 126.8"/>
  <rect x="55.4" y="141.8" width="4" height="3.8"/>
 </g>
 <!-- New slide -->
 <rect x="71.2" y="96.4" width="16.2" height="12.2" fill="#fff" stroke="#727272" stroke-width="1.6"/>
 <path d="M71.5 101.6 H87.2 M79.3 101.6 V108.4" stroke="#999" stroke-width="1"/>
 <path d="M70.4 95.6 H77 M73.7 92.2 V99" stroke="#3aa757" stroke-width="1.5"/>
 <g fill="none" stroke="#555" stroke-width="1">
  <path d="M86.4 128.2 L87.8 129.6 L89.2 128.2"/>
  <path d="M108.2 97.4 L109.6 98.8 L111 97.4 M108.2 129.4 L109.6 130.8 L111 129.4"/>
 </g>
 <rect x="95.6" y="93.8" width="8.6" height="7.4" fill="#fff" stroke="#7a7a7a" stroke-width="1.1"/>
 <path d="M97.2 95.6 V99.4 M100 95.6 V99.4" stroke="#8a8a8a" stroke-width="1.2"/>
 <rect x="95.6" y="110.2" width="8.6" height="7" fill="#fff" stroke="#8a8a8a" stroke-width="1.1"/>
 <path d="M95.2 111.6 Q96 108.6 98.6 109 L97.8 107.9 M98.6 109 L97.6 110.2" fill="none" stroke="#2b88d8" stroke-width="1"/>
 <rect x="95.6" y="126.4" width="8.6" height="8.2" fill="#fff" stroke="#7a7a7a" stroke-width="1.1"/>
 <rect x="95.2" y="125" width="9.4" height="1.8" fill="#5cb85c"/>
 <!-- Font group -->
 <rect x="125.4" y="95" width="97.3" height="14.7" rx="3" fill="#eeeeee"/>
 <rect x="224.4" y="95" width="26.3" height="14.7" rx="3" fill="#eeeeee"/>
 <g fill="none" stroke="#a6a6a6" stroke-width="0.9">
  <path d="M217.4 101.6 L219 103.2 L220.6 101.6 M245.4 101.6 L247 103.2 L248.6 101.6"/>
  <path d="M217.4 121.6 L218.8 123 L220.2 121.6 M242.2 121.6 L243.6 123 L245 121.6 M268.8 121.6 L270.2 123 L271.6 121.6 M292.4 121.6 L293.8 123 L295.2 121.6"/>
  <path d="M324.2 102 L325.6 103.4 L327 102 M348.4 102 L349.8 103.4 L351.2 102 M401 102 L402.4 103.4 L403.8 102"/>
  <path d="M368.4 122.4 L369.8 123.8 L371.2 122.4 M438.4 122.4 L439.8 123.8 L441.2 122.4"/>
  <path d="M462.8 97.6 L464.2 99 L465.6 97.6 M462.8 113.6 L464.2 115 L465.6 113.6 M462.8 129.8 L464.2 131.2 L465.6 129.8"/>
  <path d="M582.6 97.6 L584 99 L585.4 97.6 M582.6 113.6 L584 115 L585.4 113.6 M578.6 129.8 L580 131.2 L581.4 129.8"/>
  <rect x="296.2" y="142" width="3.8" height="3.8"/>
  <rect x="468.9" y="142" width="3.8" height="3.8"/>
  <rect x="589.7" y="142" width="3.8" height="3.8"/>
  <path d="M282.4 96 V108 M250.7 115.7 V129.7" stroke="#dcdcdc"/>
 </g>
 <g fill="none" stroke="#a8a8a8" stroke-width="1.1">
  <path d="M255.4 106.4 L258.6 98 L261.8 106.4 M256.6 103.4 H260.6 M262 99.4 L263 98.4 L264 99.4"/>
  <path d="M271 106.4 L273.8 99.6 L276.6 106.4 M272 104 H275.6 M277 98.6 L278 99.6 L279 98.6"/>
  <path d="M287 106.4 L290 98 L293 106.4 M288 103.6 H292 M291 105 L294.6 101.4 L296.4 103.2 L292.8 106.8 Z"/>
 </g>
 <g fill="#a8a8a8" font-family="Liberation Sans" font-size="9.5">
  <text x="130.2" y="125.6" font-weight="bold" font-size="9">B</text>
  <text x="146.2" y="125.6" font-style="italic" font-size="9">I</text>
  <text x="159.6" y="125.2" font-size="8.5">U</text>
  <text x="175.4" y="125.8" font-size="9">S</text>
  <text x="188.4" y="125.4" font-size="8">ab</text>
  <text x="204" y="124" font-size="8">AV</text>
  <text x="228" y="126" font-size="9">Aa</text>
  <text x="396" y="125.8" font-size="7.5">›¶</text>
  <text x="411.6" y="125.8" font-size="7.5">¶‹</text>
 </g>
 <g fill="none" stroke="#aaaaaa" stroke-width="0.9">
  <path d="M159.8 126.6 H165.4 M187.6 122.4 H198 M204 126.6 H213 M205.4 125.6 L204 126.6 L205.4 127.6 M211.6 125.6 L213 126.6 L211.6 127.6"/>
  <path d="M255.4 125.4 L260.6 119.4 L262.8 121.4 L257.6 127.2 Z"/>
 </g>
 <rect x="254" y="127" width="9.6" height="1.5" fill="#b6b6b6"/>
 <path d="M279 125.6 L282.5 118.2 L286 125.6 M280 123.2 H285" fill="none" stroke="#aaa" stroke-width="1.1"/>
 <rect x="278" y="127" width="9.6" height="1.5" fill="#b6b6b6"/>
 <!-- paragraph icons -->
 <g fill="none" stroke="#b2b2b2" stroke-width="1">
  <path d="M312.6 98.6 H318.8 M312.6 102.4 H318.8 M312.6 106.2 H318.8"/>
  <path d="M336 98.6 H343 M336 102.4 H343 M336 106.2 H343"/>
  <path d="M357.6 98.4 H366 M360.6 101 H366 M360.6 103.6 H366 M357.6 106.2 H366 M359.6 100.8 L357.8 102.4 L359.6 104"/>
  <path d="M372.8 98.4 H381.2 M375.8 101 H381.2 M375.8 103.6 H381.2 M372.8 106.2 H381.2 M373 100.8 L374.8 102.4 L373 104"/>
  <path d="M391 98.4 H397.2 M391 101.2 H397.2 M391 104 H397.2 M391 106.8 H397.2 M388.8 98 V106.8"/>
  <path d="M310 118.4 H319 M310 121 H316 M310 123.6 H319 M310 126.2 H316"/>
  <path d="M325 118.4 H334 M326.6 121 H332.4 M325 123.6 H334 M326.6 126.2 H332.4"/>
  <path d="M340.6 118.4 H349.4 M343.4 121 H349.4 M340.6 123.6 H349.4 M343.4 126.2 H349.4"/>
  <path d="M355.6 118.4 H364.4 M355.6 121 H364.4 M355.6 123.6 H364.4 M355.6 126.2 H364.4"/>
  <path d="M380.2 117.8 H389 V127.4 H380.2 Z M380.2 121 H389 M380.2 124.2 H389"/>
  <path d="M426 120.6 H429 M426 123.4 H429 M431 120.6 H434 M431 123.4 H434"/>
  <path d="M451.8 93.6 V102.6 M450.4 101 L451.8 102.6 L453.2 101 M457 96.6 V102.6 M455.6 101 L457 102.6 L458.4 101"/>
  <path d="M451 110.4 H458.4 V118 H451 Z M452.6 114.2 H456.8"/>
  <path d="M452 127 L455 126 H458.4 V134 H452.6 Z M451 126 L453 128"/>
 </g>
 <text x="454.6" y="99.2" font-family="Liberation Sans" font-size="5.5" fill="#aaa">A</text>
 <!-- Shapes -->
 <rect x="484.4" y="93.4" width="10.8" height="10.6" rx="1" fill="#5aa0e8" stroke="#3a78c2" stroke-width="0.8"/>
 <circle cx="495.6" cy="104.8" r="5.3" fill="#fff" stroke="#444" stroke-width="1.1"/>
 <path d="M490.6 127.6 L492 129 L493.4 127.6 M518.8 127.6 L520.2 129 L521.6 127.6 M557.2 127.4 L558.6 128.8 L560 127.4" fill="none" stroke="#555" stroke-width="1"/>
 <!-- Arrange -->
 <rect x="515.6" y="96.6" width="10.6" height="10.6" fill="#f7c873" stroke="#e8a33a" stroke-width="1"/>
 <rect x="512.4" y="93.4" width="5.6" height="5.6" fill="#fff" stroke="#444" stroke-width="1"/>
 <rect x="522" y="104" width="6" height="6" fill="#fff" stroke="#444" stroke-width="1"/>
 <!-- Quick styles -->
 <rect x="541.4" y="93.6" width="15.6" height="15.4" rx="1" fill="#f4f4f4" stroke="#c4c4c4" stroke-width="1"/>
 <path d="M549 108 L557 98.6 M548.4 108.8 Q546.4 109 547.4 106.8 L549.6 105.6" fill="none" stroke="#b4b4b4" stroke-width="1.1"/>
 <!-- Shape fill/outline/effects -->
 <g fill="none" stroke="#b0b0b0" stroke-width="1">
  <path d="M567.8 97.6 L570.8 94.6 L573.8 97.6 L570.8 100.6 Z"/>
  <path d="M568 116 L572.4 111.6 L574 113.2 L569.6 117.6 Z M566.4 110 H571 M566.4 110 V117"/>
  <path d="M567 131 L571.6 127 L575 129 L570.4 133.2 Z M567 131 V132.6 L570.4 134.4"/>
 </g>
 <rect x="566" y="102" width="9.4" height="1.4" fill="#b6b6b6"/>
 <rect x="566" y="117.6" width="9.4" height="1.4" fill="#b6b6b6"/>
 <!-- Find -->
 <circle cx="609" cy="97.6" r="2.8" fill="none" stroke="#444" stroke-width="1"/>
 <path d="M607 99.6 L603.8 102.6" stroke="#444" stroke-width="1.1"/>
 <path d="M604 114.4 Q603 117.6 606 117.6 M607.4 114 L609.6 117.4 M611.2 114.8 Q608.6 114.6 609.2 117.6" fill="none" stroke="#2b88d8" stroke-width="0.9"/>
 <path d="M606.6 110.6 V113.2 Q608.4 113.6 608 111.8" fill="none" stroke="#c35dd0" stroke-width="0.9"/>
 <path d="M649.2 113.4 L650.6 114.8 L652 113.4 M635.6 129.4 L637 130.8 L638.4 129.4" fill="none" stroke="#444" stroke-width="1"/>
 <path d="M604 126 V134.4 L606 132.4 L608 134.6 L609 134 L607.4 131.6 L609.8 131.2 Z" fill="#fff" stroke="#444" stroke-width="0.9"/>
 <!-- Add-ins -->
 <rect x="671.6" y="93.2" width="16.6" height="17.2" rx="1" fill="#f4f4f4" stroke="#c8c8c8" stroke-width="1.2"/>
 <path d="M679.9 93.8 V110 M672.2 101.8 H687.6" stroke="#c8c8c8" stroke-width="1.2"/>
 <path d="M724.4 139.8 L726.5 141.9 L728.6 139.8" fill="none" stroke="#555" stroke-width="1"/>
</svg>

<div class="a" style="left:729px;top:150px;width:0px;height:0px"></div>
<svg style="left:737px;top:220px" width="162" height="105" viewBox="737 220 162 105">
 <defs>
  <linearGradient id="vbg" x1="0" y1="1" x2="1" y2="0">
   <stop offset="0" stop-color="#a9ebc6"/><stop offset="0.22" stop-color="#eef3ea"/>
   <stop offset="0.6" stop-color="#f7f1ea"/><stop offset="0.85" stop-color="#eef4ec"/><stop offset="1" stop-color="#bff0d6"/>
  </linearGradient>
  <radialGradient id="face" cx="0.5" cy="0.45" r="0.6">
   <stop offset="0" stop-color="#d6a48a"/><stop offset="0.7" stop-color="#c08a70"/><stop offset="1" stop-color="#9c6a55"/>
  </radialGradient>
 </defs>
 <rect x="737" y="220" width="162" height="105" fill="url(#vbg)"/>
 <path d="M760 250 L790 235 L800 260 L770 280 Z M860 240 L885 232 L890 262 Z" fill="#e9e6dc" opacity="0.3"/>
 <!-- shirt/neck -->
 <path d="M814 310 Q834 324 854 310 L864 325 H804 Z" fill="#5e4f47"/>
 <ellipse cx="810.2" cy="296" rx="3" ry="6.5" fill="#b27f68"/>
 <ellipse cx="857.2" cy="296" rx="3.2" ry="6.5" fill="#b27f68"/>
 <path d="M810 282 Q809 300 815 310 Q822 319.5 834 320 Q846 319.5 852 310 Q858.5 298 856 279 Q846 267 834 266.5 Q820 267 810 282 Z" fill="url(#face)"/>
 <path d="M812.2 278.5 Q812.5 266 815.5 258 Q819 248.5 834 246.9 Q848 248 852 257 Q855 266 855.5 284 Q848 268.5 834 266.8 Q820 267.5 812.2 278.5 Z" fill="#151915"/>
 <path d="M815.5 276.6 Q821 274.6 827.5 276.2 M837.5 276 Q844 274.4 850.5 276.8" fill="none" stroke="#3b2e28" stroke-width="1.1" opacity="0.7"/>
 <rect x="810.4" y="279.4" width="19.4" height="11.6" rx="3.2" fill="none" stroke="#3a322e" stroke-width="1.05"/>
 <rect x="831" y="279.4" width="22.4" height="11.6" rx="3.2" fill="none" stroke="#3a322e" stroke-width="1.05"/>
 <path d="M829.8 282.6 H831" stroke="#2f2824" stroke-width="1.2"/>
 <path d="M853.4 282 L857.5 283" stroke="#2f2824" stroke-width="1"/>
 <path d="M828.5 293 Q827 299 830 300.5 Q834 301.5 838 300 Q839.6 297 837.5 293" fill="#a8755f" opacity="0.35"/>
 <path d="M821.4 302.2 Q829 299.2 838.2 302.2 Q829.6 306.6 821.4 302.2 Z" fill="#bd6b57"/>
 <!-- right texts -->
 <text x="870.5" y="255.6" font-family="Liberation Sans" font-weight="bold" font-size="9" fill="#5b5f5a">MIC</text>
 <text x="888" y="255.6" font-family="Liberation Sans" font-weight="bold" font-size="9" fill="#5b5f5a">M</text>
 <circle cx="885" cy="252" r="2.3" fill="#4a9a6a"/>
 <g font-family="Liberation Sans" font-weight="bold" fill="#2d5c40">
  <text x="893" y="263" font-size="4.5">Th</text>
  <text x="882" y="268.5" font-size="4" textLength="17" lengthAdjust="spacingAndGlyphs">MESJAN</text>
  <text x="876" y="273.2" font-size="4.4" textLength="23" lengthAdjust="spacingAndGlyphs">INTERNATIONAL</text>
  <text x="874" y="278" font-size="4.4" textLength="25" lengthAdjust="spacingAndGlyphs">CONFERENCE ON</text>
  <text x="877" y="282.8" font-size="4.4" textLength="22" lengthAdjust="spacingAndGlyphs">ISLAMIC STUD</text>
  <text x="890" y="288" font-size="3.5" font-weight="normal" fill="#555">Edit</text>
  <text x="882" y="292.2" font-size="3.6" font-weight="normal" fill="#4a6a55" textLength="17" lengthAdjust="spacingAndGlyphs">NOVEMBER</text>
 </g>
 <g fill="#7a7a72"><rect x="875" y="294.4" width="24" height="1"/><rect x="866" y="297" width="33" height="1"/><rect x="871" y="299.6" width="28" height="1"/></g>
 <!-- remove pin pill -->
 <rect x="743" y="226" width="73" height="17.6" rx="4" fill="#404040" fill-opacity="0.9"/>
 <path d="M752 231.2 H757.6 L756.6 232.3 V235 L758.4 236.6 H751.2 L753 235 V232.3 Z M754.8 236.6 V240.4" fill="#f2f2f2" stroke="#f2f2f2" stroke-width="0.8"/>
 <!-- name label -->
 <path d="M743 310.2 H899 V325 H739 V314.2 Q739 310.2 743 310.2 Z" fill="#3c3f42" fill-opacity="0.82"/>
</svg>
<div class="a" style="left:715px;top:276.7px;width:0;height:0"></div>
<div class="a" style="left:731px;top:276.7px;width:3.6px;height:29px;background:#6a6a6a;border-radius:1.5px"></div>

<svg style="left:0;top:500px" width="899" height="46">
 <g fill="none" stroke="#ececec" stroke-width="1.25" stroke-linecap="round" stroke-linejoin="round">
  <!-- mic -->
  <rect x="27.5" y="11.5" width="5.6" height="11" rx="2.8"/>
  <path d="M25.3 18.2 Q25.3 24.6 30.3 24.6 Q35.3 24.6 35.3 18.2 M30.3 24.6 V28.8 M27.3 28.8 H33.3"/>
  <path d="M51.4 21.8 L54 19.4 L56.6 21.8"/>
  <!-- video -->
  <rect x="89.8" y="16.4" width="11.3" height="9.2" rx="2.2"/>
  <path d="M101.1 19.6 L106.3 16.6 V25.3 L101.1 22.3"/>
  <path d="M122.9 21.8 L125.5 19.4 L128.1 21.8"/>
  <!-- participants -->
  <circle cx="232.7" cy="16.9" r="2.4"/>
  <circle cx="239.2" cy="19.4" r="2.7"/>
  <path d="M229.8 26.6 V24.8 Q229.8 21.6 233.6 21.6 H234.6"/>
  <path d="M234.6 26.6 Q234.6 23.2 239.2 23.2 Q243.3 23.2 243.3 26.6 Z"/>
  <!-- chat -->
  <path d="M310 14.6 Q310.6 12.6 313 12.6 H321.6 Q324 12.6 324 15 V20.6 Q324 22.6 322.3 23"/>
  <rect x="307.2" y="15.2" width="14" height="10" rx="3.5"/>
  <path d="M310 25.2 L309.6 28.2 L313.2 25.2"/>
  <path d="M338 21.8 L340.6 19.4 L343.2 21.8"/>
  <!-- heart -->
  <path d="M378 27.8 L371.2 21.8 Q368.6 19 370.6 15.6 Q373.8 12.2 377.6 15.8 Q381.6 12.6 385.4 15 Q388.6 18 385.6 21.8 Z"/>
  <path d="M396.3 21.8 L398.9 19.4 L401.5 21.8"/>
  <!-- info -->
  <circle cx="514" cy="20.6" r="8.7"/>
  <path d="M514 18.4 V25 M512 25 H516.2 M512.6 18.4 H514"/>
  <!-- apps -->
  <path d="M572.3 19.6 V16.6 Q572.3 13.6 575.3 13.6 H577.6"/>
  <path d="M586.9 22.2 V25.2 Q586.9 28.2 583.9 28.2 H581.6"/>
  <circle cx="584" cy="16.4" r="2.6"/>
  <circle cx="575.2" cy="25.2" r="2.6"/>
  <!-- record -->
  <circle cx="637.5" cy="20.3" r="8"/>
  <!-- more -->
  <circle cx="774.9" cy="20.4" r="8.8"/>
 </g>
 <g fill="#ececec">
  <circle cx="514" cy="15.6" r="1"/>
  <circle cx="637.5" cy="20.3" r="3.9"/>
  <circle cx="771.3" cy="20.4" r="1"/><circle cx="774.9" cy="20.4" r="1"/><circle cx="778.5" cy="20.4" r="1"/>
  <circle cx="312.3" cy="20.2" r="0.7"/><circle cx="314.3" cy="20.2" r="0.7"/><circle cx="316.3" cy="20.2" r="0.7"/>
  <rect x="696" y="11.7" width="8.3" height="8.3" rx="1.2"/>
  <rect x="705.6" y="11.7" width="8.3" height="8.3" rx="1.2"/>
  <rect x="696" y="21" width="8.3" height="8.3" rx="1.2"/>
  <rect x="705.6" y="21" width="8.3" height="8.3" rx="1.2"/>
 </g>
 <!-- share -->
 <rect x="434" y="13.4" width="17.5" height="14.1" rx="2.5" fill="#08f08e"/>
 <path d="M442.75 24.6 V17.6 M439.2 20.4 L442.75 16.9 L446.3 20.4" fill="none" stroke="#000" stroke-width="2.3"/>
 <!-- leave -->
 <path d="M889.5 13.5 L896 11.6 V26.5 L889.5 28.4 Z" fill="none" stroke="#e0245e" stroke-width="1.6"/>
 <path d="M890 13.6 H899" stroke="#e0245e" stroke-width="1.4"/>
 <g fill="none" stroke="#ececec" stroke-width="1.1">
  <circle cx="885.3" cy="14.2" r="1.7"/>
  <path d="M884.6 16.6 L882.3 22 L880.8 24 M884.6 16.6 L886.8 21 L888.6 22 M883.5 21 L885.8 24 L886.3 27.6 M882.8 22.6 L881.6 27.6"/>
 </g>
</svg>
<svg style="left:0;top:546px" width="899" height="10">
 <circle cx="21.5" cy="8" r="5.3" fill="#d9362b"/>
 <rect x="162" y="7" width="148" height="12" rx="6" fill="#f2f2f2"/>
 <rect x="284" y="7.5" width="3" height="3" fill="#d9a54a" opacity="0.8"/><rect x="292" y="7.5" width="3" height="3" fill="#d9a54a" opacity="0.8"/>
 <rect x="394" y="8" width="6" height="4" fill="#1fa0a8"/>
 <circle cx="436.5" cy="9" r="4.5" fill="#c8a68a"/>
 <circle cx="472" cy="9" r="4.4" fill="none" stroke="#e0242a" stroke-width="2"/>
 <rect x="518" y="7.5" width="17" height="4" fill="#b3402a"/>
 <rect x="553" y="7.5" width="12" height="4" fill="#777"/>
 <circle cx="622.7" cy="10.5" r="3.6" fill="#2a63c9"/>
 <g fill="#ddd"><rect x="873" y="8" width="2" height="3"/><rect x="878" y="8" width="2" height="3"/><rect x="883" y="8" width="2" height="3"/><rect x="888" y="8" width="2" height="3"/></g>
</svg>

<div class="t" style="left:4.50px;top:3.18px;font-size:11.2px;color:#e6e6e6;transform:scaleX(0.8224);transform-origin:0 0;">zoom</div>
<div class="t" style="left:4.30px;top:12.70px;font-size:12px;color:#ececec;font-weight:bold;transform:scaleX(0.9096);transform-origin:0 0;">Workplace</div>
<div class="t" style="left:137.80px;top:11.68px;font-size:10.5px;color:#d9d9d9;transform:scaleX(0.8432);transform-origin:0 0;">Meeting</div>
<div class="t" style="left:327.80px;top:11.68px;font-size:10.5px;color:#dedede;transform:scaleX(0.8080);transform-origin:0 0;">Muhammad Royhan Assaiq's scre</div>
<div class="t" style="left:772.00px;top:10.24px;font-size:9.6px;color:#d9d9d9;transform:scaleX(0.8873);transform-origin:0 0;">View</div>
<div class="t" style="left:18.40px;top:533.98px;font-size:9.2px;color:#e4e4e4;font-weight:bold;transform:scaleX(0.9297);transform-origin:0 0;">Audio</div>
<div class="t" style="left:86.50px;top:533.98px;font-size:9.2px;color:#e4e4e4;font-weight:bold;transform:scaleX(0.9534);transform-origin:0 0;">Video</div>
<div class="t" style="left:212.50px;top:533.98px;font-size:9.2px;color:#e4e4e4;font-weight:bold;transform:scaleX(0.8898);transform-origin:0 0;">Participants</div>
<div class="t" style="left:307.70px;top:533.98px;font-size:9.2px;color:#e4e4e4;font-weight:bold;transform:scaleX(0.8569);transform-origin:0 0;">Chat</div>
<div class="t" style="left:367.50px;top:533.98px;font-size:9.2px;color:#e4e4e4;font-weight:bold;transform:scaleX(0.8469);transform-origin:0 0;">React</div>
<div class="t" style="left:431.80px;top:533.98px;font-size:9.2px;color:#e4e4e4;font-weight:bold;transform:scaleX(0.8494);transform-origin:0 0;">Share</div>
<div class="t" style="left:488.30px;top:533.98px;font-size:9.2px;color:#e4e4e4;font-weight:bold;transform:scaleX(0.9740);transform-origin:0 0;">Meeting info</div>
<div class="t" style="left:569.30px;top:533.98px;font-size:9.2px;color:#e4e4e4;font-weight:bold;transform:scaleX(0.8707);transform-origin:0 0;">Apps</div>
<div class="t" style="left:623.70px;top:533.98px;font-size:9.2px;color:#e4e4e4;font-weight:bold;transform:scaleX(0.8845);transform-origin:0 0;">Record</div>
<div class="t" style="left:673.00px;top:533.98px;font-size:9.2px;color:#e4e4e4;font-weight:bold;transform:scaleX(0.9110);transform-origin:0 0;">Breakout rooms</div>
<div class="t" style="left:763.60px;top:533.98px;font-size:9.2px;color:#e4e4e4;font-weight:bold;transform:scaleX(0.9839);transform-origin:0 0;">More</div>
<div class="t" style="left:867.00px;top:533.98px;font-size:9.2px;color:#e4e4e4;font-weight:bold;transform:scaleX(0.8531);transform-origin:0 0;">Leave room</div>
<div class="t" style="left:248.40px;top:515.38px;font-size:8.5px;color:#cfcfcf;">9</div>
<div class="t" style="left:9.00px;top:114.58px;font-size:8.5px;color:#3b3b3b;transform:scaleX(0.7172);transform-origin:0 0;">Paste</div>
<div class="t" style="left:73.00px;top:114.58px;font-size:8.5px;color:#3b3b3b;transform:scaleX(0.7640);transform-origin:0 0;">New</div>
<div class="t" style="left:68.70px;top:123.97px;font-size:8.5px;color:#3b3b3b;transform:scaleX(0.7828);transform-origin:0 0;">Slide</div>
<div class="t" style="left:13.00px;top:139.70px;font-size:8px;color:#555;transform:scaleX(0.7737);transform-origin:0 0;">Clipboard</div>
<div class="t" style="left:83.30px;top:139.70px;font-size:8px;color:#555;transform:scaleX(0.7065);transform-origin:0 0;">Slides</div>
<div class="t" style="left:200.70px;top:139.70px;font-size:8px;color:#555;transform:scaleX(0.7493);transform-origin:0 0;">Font</div>
<div class="t" style="left:370.00px;top:139.70px;font-size:8px;color:#555;transform:scaleX(0.7495);transform-origin:0 0;">Paragraph</div>
<div class="t" style="left:519.40px;top:139.70px;font-size:8px;color:#555;transform:scaleX(0.7702);transform-origin:0 0;">Drawing</div>
<div class="t" style="left:619.00px;top:139.70px;font-size:8px;color:#555;transform:scaleX(0.7683);transform-origin:0 0;">Editing</div>
<div class="t" style="left:669.00px;top:139.70px;font-size:8px;color:#555;transform:scaleX(0.7742);transform-origin:0 0;">Add-ins</div>
<div class="t" style="left:225.80px;top:99.28px;font-size:8.5px;color:#b0b0b0;transform:scaleX(0.7604);transform-origin:0 0;">53</div>
<div class="t" style="left:482.00px;top:114.28px;font-size:8.5px;color:#3b3b3b;transform:scaleX(0.7454);transform-origin:0 0;">Shapes</div>
<div class="t" style="left:508.30px;top:114.28px;font-size:8.5px;color:#3b3b3b;transform:scaleX(0.8066);transform-origin:0 0;">Arrange</div>
<div class="t" style="left:540.00px;top:114.28px;font-size:8.5px;color:#a8a8a8;transform:scaleX(0.7822);transform-origin:0 0;">Quick</div>
<div class="t" style="left:536.70px;top:123.97px;font-size:8.5px;color:#a8a8a8;transform:scaleX(0.7471);transform-origin:0 0;">Styles</div>
<div class="t" style="left:615.00px;top:94.18px;font-size:8.5px;color:#3b3b3b;transform:scaleX(0.7494);transform-origin:0 0;">Find</div>
<div class="t" style="left:615.00px;top:109.58px;font-size:8.5px;color:#3b3b3b;transform:scaleX(0.7311);transform-origin:0 0;">Replace</div>
<div class="t" style="left:615.00px;top:125.38px;font-size:8.5px;color:#3b3b3b;transform:scaleX(0.7365);transform-origin:0 0;">Select</div>
<div class="t" style="left:668.20px;top:113.78px;font-size:8.5px;color:#a8a8a8;transform:scaleX(0.8395);transform-origin:0 0;">Add-ins</div>
<div class="t" style="left:763.30px;top:231.28px;font-size:9.2px;color:#e2e2e2;transform:scaleX(0.9321);transform-origin:0 0;">Remove pin</div>
<div class="t" style="left:742.40px;top:312.33px;font-size:10.2px;color:#ececec;transform:scaleX(0.8694);transform-origin:0 0;">Panel 7_Presenter_Hamam Burhanuddin</div>
</body></html>
